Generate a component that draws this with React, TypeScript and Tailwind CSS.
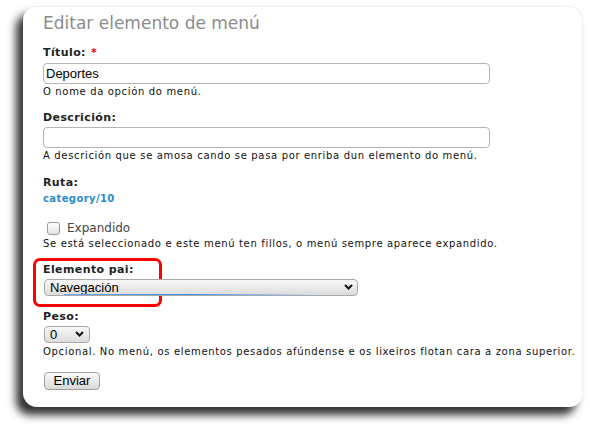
import { useState } from 'react';

const sans = "font-['DejaVu_Sans',Verdana,sans-serif]";
const arial = "font-['Liberation_Sans',Arial,sans-serif]";

function Label({ text, required }: { text: string; required?: boolean }) {
  return (
    <div className={`${sans} text-[11px] leading-[14px] font-bold text-[#222] tracking-[0.4px]`}>
      {text}
      {required && <span className="ml-[5px] text-[#e00]">*</span>}
    </div>
  );
}

function Help({ text }: { text: string }) {
  return <div className={`${sans} text-[10px] leading-[13px] text-[#111] tracking-[0.66px]`}>{text}</div>;
}

function Chevron() {
  return (
    <svg width="9" height="6" viewBox="0 0 9 6" className="pointer-events-none">
      <path d="M1 1l3.5 3.5L8 1" fill="none" stroke="#111" strokeWidth="2" />
    </svg>
  );
}

export default function App() {
  const [title, setTitle] = useState('Deportes');
  const [desc, setDesc] = useState('');
  const [expanded, setExpanded] = useState(false);

  return (
    <div className="w-[590px] h-[430px] bg-white overflow-hidden">
      <div className="ml-[23px] mt-[6px] w-[560px] h-[401px] rounded-[14px] bg-white border-t border-r border-[#f1f1f1] shadow-[-7px_8px_8px_rgba(0,0,0,0.8)] pl-[20px] pt-[6px]">
        <h1 className={`${sans} text-[17px] leading-[20px] text-[#8c8c8c]`}>Editar elemento de menú</h1>

        <div className="mt-[13px]">
          <Label text="Título:" required />
          <input
            value={title}
            onChange={(e) => setTitle(e.target.value)}
            className={`${arial} mt-[3px] block w-[447px] h-[21px] rounded-[4px] border border-[#b5b5b5] px-[2px] text-[13px] text-black outline-none`}
          />
          <div className="mt-[1px]">
            <Help text="O nome da opción do menú." />
          </div>
        </div>

        <div className="mt-[13px]">
          <Label text="Descrición:" />
          <input
            value={desc}
            onChange={(e) => setDesc(e.target.value)}
            className={`${arial} mt-[2px] block w-[447px] h-[21px] rounded-[4px] border border-[#b5b5b5] px-[2px] text-[13px] text-black outline-none`}
          />
          <div className="mt-[1px]">
            <Help text="A descrición que se amosa cando se pasa por enriba dun elemento do menú." />
          </div>
        </div>

        <div className="mt-[14px]">
          <Label text="Ruta:" />
          <div className={`${sans} mt-[2px] text-[10px] leading-[13px] font-bold text-[#2a8ccf] tracking-[0.4px]`}>category/10</div>
        </div>

        <div className="mt-[15px]">
          <label className="flex items-center h-[16px] pl-[4px]">
            <input
              type="checkbox"
              checked={expanded}
              onChange={(e) => setExpanded(e.target.checked)}
              className="appearance-none w-[13px] h-[13px] rounded-[3px] border border-[#9a9a9a] bg-gradient-to-b from-white to-[#e2e2e2]"
            />
            <span className={`${sans} ml-[7px] text-[12px] leading-[16px] text-[#444]`}>Expandido</span>
          </label>
          <div className="mt-[1px]">
            <Help text="Se está seleccionado e este menú ten fillos, o menú sempre aparece expandido." />
          </div>
        </div>

        <div className="relative mt-[13px]">
          <div className="absolute left-[-10px] top-[-5px] w-[129px] h-[49px] rounded-[7px] border-[3px] border-[#f00]" />
          <Label text="Elemento pai:" />
          <div className="relative mt-[2px] w-[314px] h-[17px] ml-[1px]">
            <select
              className={`${arial} appearance-none block w-full h-full rounded-[4px] border border-[#a8a8a8] bg-gradient-to-b from-[#f8f8f8] to-[#dcdcdc] pl-[5px] text-[13px] leading-[15px] text-black outline-none`}
              defaultValue="nav"
            >
              <option value="nav">Navegación</option>
            </select>
            <div className="absolute left-[20px] right-[40px] bottom-[1px] h-[1px] bg-gradient-to-r from-[#6aa8e8] via-[#3d8fe0] to-[#cfe2f6]" />
            <div className="absolute right-[5px] top-[5px]">
              <Chevron />
            </div>
          </div>
        </div>

        <div className="mt-[14px]">
          <Label text="Peso:" />
          <div className="relative mt-[2px] w-[46px] h-[17px] ml-[1px]">
            <select
              className={`${arial} appearance-none block w-full h-full rounded-[4px] border border-[#a8a8a8] bg-gradient-to-b from-[#f8f8f8] to-[#dcdcdc] pl-[5px] text-[13px] leading-[15px] text-black outline-none`}
              defaultValue="0"
            >
              <option value="0">0</option>
            </select>
            <div className="absolute right-[6px] top-[5px]">
              <Chevron />
            </div>
          </div>
          <div className="mt-[2px]">
            <Help text="Opcional. No menú, os elementos pesados afúndense e os lixeiros flotan cara a zona superior." />
          </div>
        </div>

        <button
          className={`${arial} mt-[14px] ml-[1px] block w-[56px] h-[18px] rounded-[4px] border border-[#a0a0a0] bg-gradient-to-b from-[#fafafa] to-[#dadada] text-[13px] leading-[16px] text-black`}
        >
          Enviar
        </button>
      </div>
    </div>
  );
}
